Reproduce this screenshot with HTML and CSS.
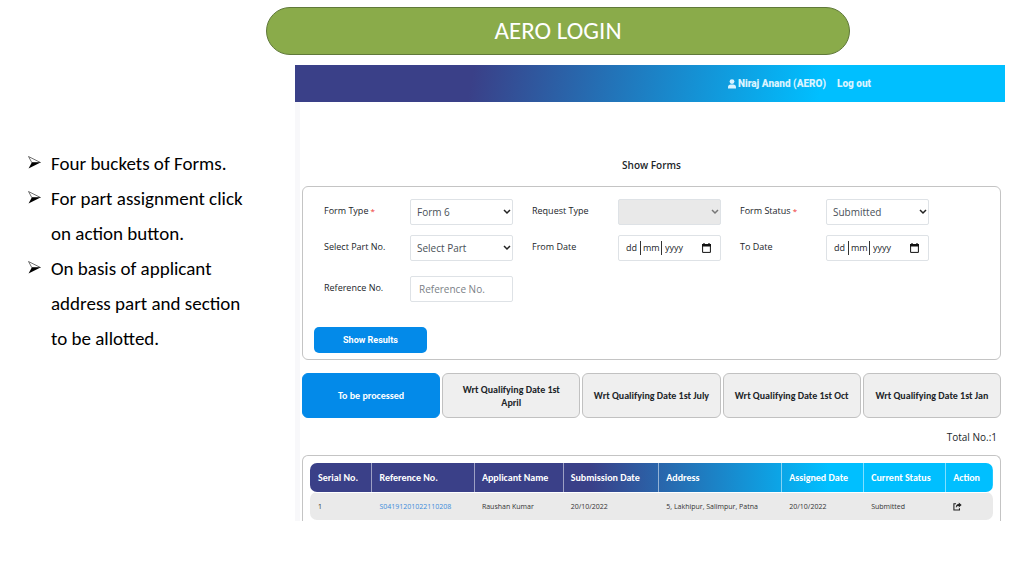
FILE: index.html
```html
<!DOCTYPE html>
<html lang="en">
<head>
<meta charset="utf-8">
<meta name="viewport" content="width=device-width, initial-scale=1">
<title>AERO Login</title>
<link rel="stylesheet" href="styles.css">
</head>
<body>
<h1 class="slide-title">AERO LOGIN</h1>
<div class="slide-body">
  <ul class="notes">
    <li class="note"><svg class="note-arrow" viewBox="0 0 12 12" aria-hidden="true"><path d="M.5.5 11.5 6H3.5Z" fill="#fff" stroke="#222" stroke-width=".6"/><path d="M3.5 6h8L.5 11.5Z"/></svg><span>Four buckets of Forms.</span></li>
    <li class="note"><svg class="note-arrow" viewBox="0 0 12 12" aria-hidden="true"><path d="M.5.5 11.5 6H3.5Z" fill="#fff" stroke="#222" stroke-width=".6"/><path d="M3.5 6h8L.5 11.5Z"/></svg><span>For part assignment click on action button.</span></li>
    <li class="note"><svg class="note-arrow" viewBox="0 0 12 12" aria-hidden="true"><path d="M.5.5 11.5 6H3.5Z" fill="#fff" stroke="#222" stroke-width=".6"/><path d="M3.5 6h8L.5 11.5Z"/></svg><span>On basis of applicant address part and section to be allotted.</span></li>
  </ul>
  <main class="screen">
    <nav class="navbar">
      <a class="nav-link" href="#profile"><svg class="user-icon" viewBox="0 0 8 10" aria-hidden="true"><circle cx="4" cy="2.6" r="2.4"/><path d="M0 9.5V8.2C0 6.5 1.2 5.6 2.6 5.6h2.8C6.8 5.6 8 6.5 8 8.2v1.3Z"/></svg>Niraj Anand (AERO)</a>
      <a class="nav-link" href="#logout">Log out</a>
    </nav>
    <div class="content">
      <h2 class="page-title">Show Forms</h2>
      <form class="filters">
        <div class="fields">
          <div class="field"><label for="form-type">Form Type<span class="required"> *</span></label>
            <div class="select-box"><select class="control" id="form-type"><option>Form 6</option></select><svg class="chevron" viewBox="0 0 8 6" aria-hidden="true"><path d="m1 1 3 3 3-3"/></svg></div></div>
          <div class="field"><label for="request-type">Request Type</label>
            <div class="select-box"><select class="control" id="request-type" disabled><option></option></select><svg class="chevron chevron-muted" viewBox="0 0 8 6" aria-hidden="true"><path d="m1 1 3 3 3-3"/></svg></div></div>
          <div class="field"><label for="form-status">Form Status<span class="required"> *</span></label>
            <div class="select-box"><select class="control" id="form-status"><option>Submitted</option></select><svg class="chevron" viewBox="0 0 8 6" aria-hidden="true"><path d="m1 1 3 3 3-3"/></svg></div></div>
          <div class="field"><label for="part">Select Part No.</label>
            <div class="select-box"><select class="control" id="part"><option>Select Part</option></select><svg class="chevron" viewBox="0 0 8 6" aria-hidden="true"><path d="m1 1 3 3 3-3"/></svg></div></div>
          <div class="field"><label for="from-day">From Date</label>
            <div class="control date-box">
              <input class="date-part" id="from-day" placeholder="dd"><input class="date-part date-month" aria-label="From month" placeholder="mm"><input class="date-part date-year" aria-label="From year" placeholder="yyyy">
              <button class="date-button" type="button" aria-label="Choose from date"><svg class="calendar" viewBox="0 0 9 10" aria-hidden="true"><path class="cal-frame" d="M.6 1.6h7.8v7.8H.6Z"/><path d="M0 1h9v2.4H0ZM1.4 0h1.2v1H1.4ZM6.4 0h1.2v1H6.4Z"/></svg></button>
            </div></div>
          <div class="field"><label for="to-day">To Date</label>
            <div class="control date-box">
              <input class="date-part" id="to-day" placeholder="dd"><input class="date-part date-month" aria-label="To month" placeholder="mm"><input class="date-part date-year" aria-label="To year" placeholder="yyyy">
              <button class="date-button" type="button" aria-label="Choose to date"><svg class="calendar" viewBox="0 0 9 10" aria-hidden="true"><path class="cal-frame" d="M.6 1.6h7.8v7.8H.6Z"/><path d="M0 1h9v2.4H0ZM1.4 0h1.2v1H1.4ZM6.4 0h1.2v1H6.4Z"/></svg></button>
            </div></div>
          <div class="field field-reference"><label for="reference">Reference No.</label>
            <input class="control" id="reference" type="text" placeholder="Reference No."></div>
        </div>
        <button class="submit" type="button">Show Results</button>
      </form>
      <div class="tabs">
        <button class="tab tab-active" type="button">To be processed</button>
        <button class="tab" type="button">Wrt Qualifying Date 1st April</button>
        <button class="tab" type="button">Wrt Qualifying Date 1st July</button>
        <button class="tab" type="button">Wrt Qualifying Date 1st Oct</button>
        <button class="tab" type="button">Wrt Qualifying Date 1st Jan</button>
      </div>
      <p class="total">Total No.:1</p>
      <section class="results">
        <table class="table">
          <colgroup><col class="col-serial"><col class="col-reference"><col class="col-name"><col class="col-submitted"><col class="col-address"><col class="col-date"><col class="col-date"><col class="col-action"></colgroup>
          <thead><tr><th>Serial No.</th><th>Reference No.</th><th>Applicant Name</th><th>Submission Date</th><th>Address</th><th>Assigned Date</th><th>Current Status</th><th>Action</th></tr></thead>
          <tbody><tr><td>1</td><td><a class="ref-link" href="#form">S04191201022110208</a></td><td>Raushan Kumar</td><td>20/10/2022</td><td>5, Lakhipur, Salimpur, Patna</td><td>20/10/2022</td><td>Submitted</td><td><button class="action" type="button" aria-label="Open form"><svg class="share" viewBox="0 0 10 9" aria-hidden="true"><path class="share-box" d="M3.4 1.5H1v6.8h6.2V6.4"/><path d="M6.4 0 9.6 2.8 6.4 5.6V4C4.8 4 4 4.6 3.3 6.3 2.6 3.4 4 1.7 6.4 1.6Z"/></svg></button></td></tr></tbody>
        </table>
      </section>
    </div>
  </main>
</div>
</body>
</html>
```
FILE: styles.css
```css
* { box-sizing: border-box; }
body {
  margin: 0;
  padding-top: 7px;
  background: #fff;
  color: #212529;
  font-family: "Open Sans", "Noto Sans", sans-serif;
  font-size: 9px;
}
button, input, select { font: inherit; color: inherit; }
.slide-title {
  margin: 0 17% 10px 26%;
  border: 1px solid #60793a;
  border-radius: 24px;
  background: #8aab4a;
  color: #fff;
  font: 400 25px/46px Carlito, "Open Sans", sans-serif;
  text-align: center;
}
.slide-body { display: flex; padding-right: 19px; }
.notes {
  flex: 0 0 295px;
  margin: 0;
  padding: 81px 42px 0 28px;
  list-style: none;
  color: #000;
  font: 19px/35px Carlito, "Noto Sans", sans-serif;
}
.note { display: flex; gap: 10px; }
.note-arrow { flex: 0 0 13px; height: 13px; margin-top: 10px; }
.screen { flex: 1; min-width: 0; }
.navbar {
  display: flex;
  justify-content: flex-end;
  align-items: center;
  gap: 11px;
  height: 37px;
  padding-right: 134px;
  background: linear-gradient(100deg, #3a4088 25%, #00bfff 74%);
}
.nav-link {
  display: flex;
  align-items: center;
  gap: 2px;
  color: #d9f3ff;
  font-family: Roboto, "Liberation Sans", sans-serif;
  font-size: 10px;
  font-weight: 900;
  text-decoration: none;
}
.user-icon { width: 8px; height: 10px; fill: currentColor; }
.content { padding: 56px 4px 0 2px; border-left: 5px solid #f8f8fa; }
.page-title { margin: 0 0 14px; font-size: 10px; line-height: 14px; font-weight: 600; text-align: center; }
.filters { border: 1px solid #c4c4c4; border-radius: 6px; padding: 12px 11px 6px; }
.fields {
  display: grid;
  grid-template-columns: repeat(3, 1fr);
  gap: 10px 19px;
  padding: 0 60px 0 10px;
}
.field { display: grid; grid-template-columns: 86px 1fr; align-items: start; line-height: 24px; }
.field label { font-weight: 500; white-space: nowrap; }
.field-reference { margin-top: 5px; }
.required { color: #e33; font-size: 8px; }
.control {
  width: 100%;
  min-width: 0;
  height: 26px;
  border: 1px solid #dee2e6;
  border-radius: 2px;
  padding: 0 8px;
  background: #fff;
  color: #495057;
  font-size: 10px;
}
.control::placeholder { color: #7b8187; }
.select-box { display: grid; align-items: center; }
.select-box > * { grid-area: 1 / 1; }
select.control { appearance: none; padding: 0 6px; }
select.control:disabled { background: #e9e9e9; opacity: 1; }
.chevron {
  justify-self: end;
  width: 8px;
  height: 6px;
  margin-right: 2px;
  fill: none;
  stroke: #222;
  stroke-width: 1.5;
  pointer-events: none;
}
.chevron-muted { stroke: #777; }
.date-box { display: flex; align-items: center; padding: 0 9px 0 7px; color: #212529; }
.date-part { width: 14px; height: 14px; border: 0; padding: 0; background: none; font-size: 9px; }
.date-part::placeholder { color: #212529; opacity: 1; }
.date-month { width: 22px; border: solid #333; border-width: 0 1px; padding-left: 2px; }
.date-year { width: 24px; padding-left: 3px; }
.date-button { display: flex; margin-left: auto; border: 0; padding: 0; background: none; }
.calendar { width: 9px; height: 10px; fill: #111; }
.cal-frame { fill: none; stroke: #111; stroke-width: 1; }
.submit {
  display: block;
  width: 113px;
  height: 26px;
  margin-top: 25px;
  border: 0;
  border-radius: 5px;
  background: #038ae9;
  color: #fff;
  font-family: Roboto, sans-serif;
  font-size: 9px;
  font-weight: 700;
}
.tabs { display: grid; grid-template-columns: repeat(5, 1fr); gap: 2px; margin-top: 13px; }
.tab {
  height: 45px;
  border: 1px solid #c1c1c1;
  border-radius: 6px;
  padding: 0 18px;
  background: #efefef;
  font-family: Carlito, "Open Sans", sans-serif;
  font-size: 10px;
  font-weight: 700;
  line-height: 13px;
}
.tab:nth-child(n+3) { padding: 0 8px; }
.tab-active { border-color: #038ae9; background: #038ae9; color: #fff; }
.total { margin: 12px 4px 11px; font-size: 10px; line-height: 14px; text-align: right; }
.results { border: 1px solid #c4c4c4; border-bottom: 0; border-radius: 6px 6px 0 0; padding: 7px 7px 1px; }
.table { width: 100%; table-layout: fixed; border-collapse: separate; border-spacing: 0; }
.table tr { clip-path: inset(0 round 7px); }
.table th, .table td { padding: 0 0 0 8px; text-align: left; white-space: nowrap; }
.table th { height: 29px; font-family: Carlito, "Open Sans", sans-serif; font-size: 10px; font-weight: 700; color: #fff; }
.table th + th { border-left: 1px solid #ffffff80; padding-left: 7px; }
.table td { height: 28px; border-top: 1px solid #fff; font-size: 7px; color: #333; }
.table thead tr { background: linear-gradient(to right, #3a4088 41%, #00bfff 76%); }
.table tbody tr { background: #eaeaea; }
.col-serial { width: 9%; }
.col-reference { width: 15%; }
.col-name { width: 13%; }
.col-submitted { width: 14%; }
.col-address { width: 18%; }
.col-date { width: 12%; }
.col-action { width: 7%; }
.ref-link { color: #3b8ddb; text-decoration: none; }
.action { display: flex; border: 0; padding: 0; background: none; }
.share { width: 9px; height: 9px; fill: #222; }
.share-box { fill: none; stroke: #222; stroke-width: 1.2; }
```
